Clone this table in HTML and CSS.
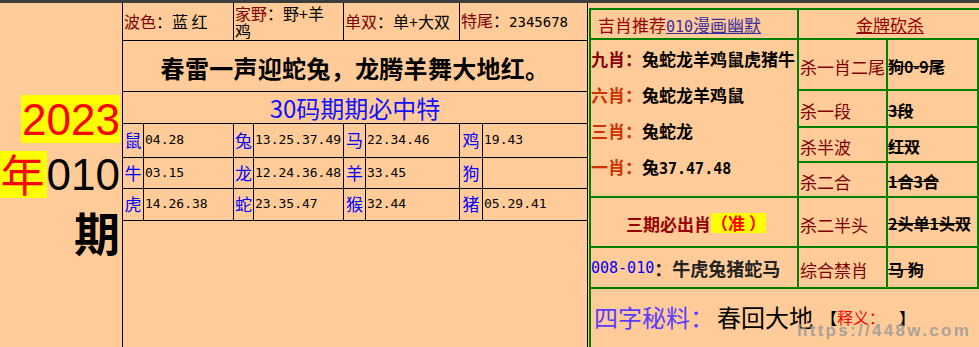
FILE: index.html
```html
<!DOCTYPE html>
<html lang="zh">
<head>
<meta charset="utf-8">
<title>2023年010期</title>
<link rel="stylesheet" href="styles.css">
</head>
<body>
<div class="topbar"></div>
<div class="page">
  <div class="left">
    <div class="issue">
      <div class="year"><span class="hl">2023</span></div>
      <div class="no"><span class="hl nian">年</span>010</div>
      <div class="qi">期</div>
    </div>
    <div class="main">
      <div class="info">
        <div class="icell"><span class="it"><span class="lab">波色</span>：蓝 红</span></div>
        <div class="icell"><span class="it"><span class="lab">家野</span>：野+羊<br>鸡</span></div>
        <div class="icell"><span class="it"><span class="lab">单双</span>：单+大双</span></div>
        <div class="icell"><span class="it"><span class="lab">特尾</span>：<span class="num big">2345678</span></span></div>
      </div>
      <div class="poem">春雷一声迎蛇兔，龙腾羊舞大地红。</div>
      <div class="title">30码期期必中特</div>
      <div class="codes">
        <div class="zo">鼠</div><div class="nums num">04.28</div>
        <div class="zo">兔</div><div class="nums num">13.25.37.49</div>
        <div class="zo">马</div><div class="nums num">22.34.46</div>
        <div class="zo">鸡</div><div class="nums num">19.43</div>
        <div class="zo">牛</div><div class="nums num">03.15</div>
        <div class="zo">龙</div><div class="nums num">12.24.36.48</div>
        <div class="zo">羊</div><div class="nums num">33.45</div>
        <div class="zo">狗</div><div class="nums num"></div>
        <div class="zo">虎</div><div class="nums num">14.26.38</div>
        <div class="zo">蛇</div><div class="nums num">23.35.47</div>
        <div class="zo">猴</div><div class="nums num">32.44</div>
        <div class="zo">猪</div><div class="nums num">05.29.41</div>
      </div>
    </div>
  </div>
  <div class="right">
    <div class="rc rhead">吉肖推荐<span class="link"><span class="num">010</span>漫画幽默</span></div>
    <div class="rc rhead2"><span class="gold">金牌砍杀</span></div>
    <div class="rc picks">
      <div class="pick"><span class="pl dark">九肖：</span>兔蛇龙羊鸡鼠虎猪牛</div>
      <div class="pick"><span class="pl">六肖：</span>兔蛇龙羊鸡鼠</div>
      <div class="pick"><span class="pl">三肖：</span>兔蛇龙</div>
      <div class="pick"><span class="pl">一肖：</span>兔<span class="num">37.47.48</span></div>
    </div>
    <div class="rc kl">杀一肖二尾</div><div class="rc kv"><span class="st">狗0-9尾</span></div>
    <div class="rc kl">杀一段</div><div class="rc kv"><span class="st">3段</span></div>
    <div class="rc kl">杀半波</div><div class="rc kv"><span class="st">红双</span></div>
    <div class="rc kl">杀二合</div><div class="rc kv"><span class="st">1合3合</span></div>
    <div class="rc must">三期必出肖<span class="zhun">（准&nbsp;）</span></div>
    <div class="rc kl">杀二半头</div><div class="rc kv"><span class="st">2头单1头双</span></div>
    <div class="rc range"><span class="num rng">008-010</span>：牛虎兔猪蛇马</div>
    <div class="rc kl">综合禁肖</div><div class="rc kv"><span class="st">马&nbsp;狗</span></div>
    <div class="rc secret"><span class="sk">四字秘料：</span> <span class="sv">春回大地</span><span class="br open">【</span><span class="sy">释义：</span><span class="br close">】</span></div>
  </div>
</div>
<div class="watermark">https://448w.com</div>
</body>
</html>
```

FILE: styles.css
```css
html, body {
  margin: 0;
  padding: 0;
}
body {
  width: 979px;
  height: 347px;
  overflow: hidden;
  background: #ffcc99;
  font-family: "Noto Sans CJK SC", sans-serif;
  color: #000;
  position: relative;
}
* { box-sizing: border-box; }

.topbar {
  height: 3px;
  background: #3d3d3d;
}
.page {
  display: flex;
  height: 344px;
}
.left {
  display: flex;
  width: 588px;
  flex: none;
}

/* issue column */
.issue {
  width: 123px;
  border-right: 1px solid #000;
  display: flex;
  flex-direction: column;
  justify-content: center;
  align-items: flex-end;
  padding: 6px 2px 0 0;
}
.year, .no, .qi {
  font-family: "Liberation Sans", "Noto Sans CJK SC", sans-serif;
  font-size: 44px;
  white-space: nowrap;
}
.year { height: 56px; }
.no { height: 54px; display: flex; align-items: flex-start; line-height: 47px; }
.year .hl {
  display: inline-block;
  height: 48px;
  line-height: 49px;
  background: #ffff00;
  color: #ff0000;
  padding-left: 1px;
}
.nian {
  display: inline-block;
  height: 47px;
  line-height: 44px;
  background: #ffff00;
  color: #ff0000;
  font-family: "Noto Sans CJK SC", sans-serif;
  padding: 0 2px 0 1px;
}
.qi {
  font-family: "Noto Sans CJK SC", sans-serif;
  font-weight: 700;
  font-size: 46px;
  height: 52px;
  line-height: 52px;
  margin-bottom: 4px;
}

/* main left table */
.main {
  width: 465px;
  border-right: 1px solid #000;
}
.info {
  display: grid;
  grid-template-columns: 111px 110px 116px 127px;
  height: 38px;
  border-bottom: 1px solid #000;
}
.icell {
  display: flex;
  align-items: center;
  font-size: 16px;
  line-height: 17px;
  padding-left: 1px;
  border-right: 1px solid #000;
}
.icell:last-child { border-right: none; }
.it { display: block; }
.lab { color: #800000; }

.num {
  font-family: "DejaVu Sans Mono", monospace;
  font-size: 13px;
}
.num.big { font-size: 14px; }

.poem {
  height: 51px;
  border-bottom: 1px solid #000;
  display: flex;
  align-items: center;
  justify-content: center;
  font-size: 24px;
  font-weight: 700;
  letter-spacing: 0.3px;
  padding-top: 2px;
}
.title {
  height: 32px;
  border-bottom: 1px solid #000;
  display: flex;
  align-items: center;
  justify-content: center;
  font-size: 24px;
  color: #1010ff;
  line-height: 31px;
}
.codes {
  display: grid;
  grid-template-columns: 21px 90px 20px 90px 22px 94px 23px 104px;
  grid-template-rows: 34px 31px 32px;
}
.zo, .nums {
  border-right: 1px solid #000;
  border-bottom: 1px solid #000;
  display: flex;
  align-items: center;
}
.zo {
  color: #0000ff;
  font-size: 17px;
  justify-content: center;
  padding-bottom: 2px;
}
.nums {
  padding-left: 1px;
  padding-bottom: 2px;
}
.codes > :nth-child(8n) { border-right: none; }

/* right panel */
.right {
  flex: none;
  width: 390px;
  margin: 5px 0 0 1px;
  border-left: 2px solid #008000;
  border-top: 2px solid #008000;
  display: grid;
  grid-template-columns: 208px 89px 91px;
  grid-template-rows: 30px 51px 37px 35px 35px 50px 41px 70px;
  align-self: flex-start;
}
.rc {
  border-right: 2px solid #008000;
  border-bottom: 2px solid #008000;
  display: flex;
  align-items: center;
  font-size: 17px;
  white-space: nowrap;
}
.rhead {
  color: #990000;
  padding-left: 7px;
}
.link {
  color: #3b2f9e;
  text-decoration: underline;
}
.link .num { font-size: 15px; }
.rhead2 {
  grid-column: 2 / 4;
  justify-content: center;
  border-right: none;
  padding-left: 2px;
}
.gold {
  color: #990000;
  text-decoration: underline;
}
.picks {
  grid-column: 1;
  grid-row: 2 / 6;
  flex-direction: column;
  align-items: flex-start;
  justify-content: flex-start;
  padding-top: 1px;
}
.pick {
  line-height: 36px;
  font-weight: 700;
}
.pick .num { font-size: 15px; font-weight: 700; }
.pl { color: #cc3300; }
.pl.dark { color: #880000; }
.kl {
  color: #800000;
  padding: 4px 0 0 1px;
}
.kv {
  font-weight: 700;
  font-size: 16px;
  padding-top: 2px;
}
.st { text-decoration: line-through; }
.must {
  grid-column: 1;
  justify-content: center;
  color: #990000;
  font-weight: 700;
  padding: 2px 0 0 4px;
}
.zhun {
  color: #ff0000;
  background: #ffff00;
  line-height: 20px;
}
.range {
  grid-column: 1;
  font-weight: 700;
  font-size: 18px;
  color: #222;
}
.rng {
  color: #0000ff;
  font-size: 15px;
  font-weight: 400;
}
.secret {
  grid-column: 1 / 4;
  border-right: none;
  border-bottom: none;
  align-items: flex-start;
  padding: 10px 0 0 3px;
  line-height: 36px;
  white-space: pre;
}
.sk {
  color: #5a3cff;
  font-size: 24px;
}
.sv {
  font-size: 24px;
  margin-left: 3px;
}
.br {
  font-size: 16px;
  font-weight: 700;
}
.br.open { margin-left: 8px; }
.br.close { margin-left: 14px; }
.sy {
  font-size: 16px;
  color: #ff0000;
}

.watermark {
  position: absolute;
  left: 797px;
  top: 322px;
  font-family: "Liberation Sans", sans-serif;
  font-weight: 700;
  font-size: 17px;
  line-height: 17px;
  letter-spacing: 2.3px;
  color: rgba(150, 150, 150, 0.8);
  white-space: nowrap;
}
```
